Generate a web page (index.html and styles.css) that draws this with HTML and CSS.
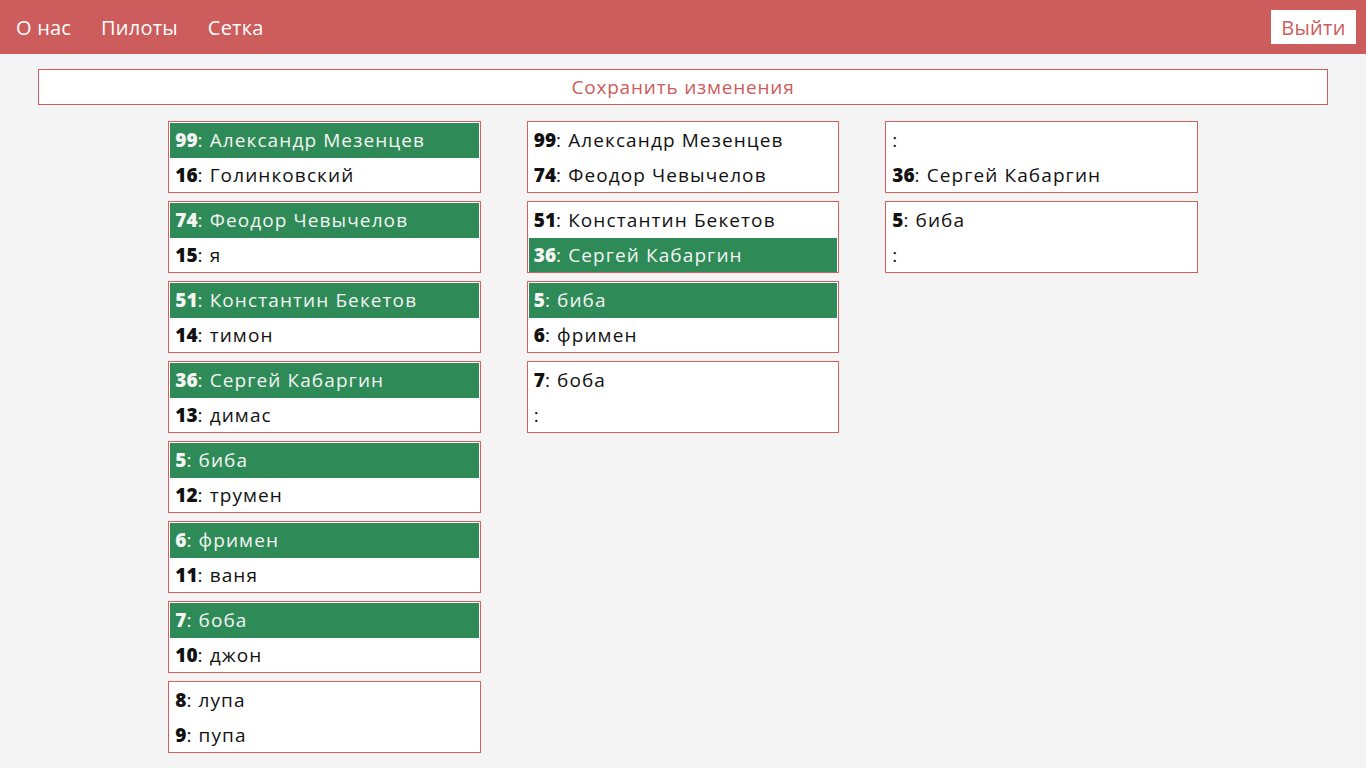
FILE: index.html
```html
<!DOCTYPE html>
<html lang="ru">
<head>
<meta charset="utf-8">
<title>Сетка</title>
<link rel="stylesheet" href="styles.css">
</head>
<body>
<header class="topbar">
  <nav class="nav">
    <a class="nav-link" href="#">О нас</a>
    <a class="nav-link" href="#">Пилоты</a>
    <a class="nav-link" href="#">Сетка</a>
  </nav>
  <button class="logout">Выйти</button>
</header>
<main class="main">
  <button class="save">Сохранить изменения</button>
  <div class="bracket">
    <div class="round">
      <div class="pair"><div class="row win"><b>99</b>: Александр Мезенцев</div><div class="row"><b>16</b>: Голинковский</div></div>
      <div class="pair"><div class="row win"><b>74</b>: Феодор Чевычелов</div><div class="row"><b>15</b>: я</div></div>
      <div class="pair"><div class="row win"><b>51</b>: Константин Бекетов</div><div class="row"><b>14</b>: тимон</div></div>
      <div class="pair"><div class="row win"><b>36</b>: Сергей Кабаргин</div><div class="row"><b>13</b>: димас</div></div>
      <div class="pair"><div class="row win"><b>5</b>: биба</div><div class="row"><b>12</b>: трумен</div></div>
      <div class="pair"><div class="row win"><b>6</b>: фримен</div><div class="row"><b>11</b>: ваня</div></div>
      <div class="pair"><div class="row win"><b>7</b>: боба</div><div class="row"><b>10</b>: джон</div></div>
      <div class="pair"><div class="row"><b>8</b>: лупа</div><div class="row"><b>9</b>: пупа</div></div>
    </div>
    <div class="round">
      <div class="pair"><div class="row"><b>99</b>: Александр Мезенцев</div><div class="row"><b>74</b>: Феодор Чевычелов</div></div>
      <div class="pair"><div class="row"><b>51</b>: Константин Бекетов</div><div class="row win"><b>36</b>: Сергей Кабаргин</div></div>
      <div class="pair"><div class="row win"><b>5</b>: биба</div><div class="row"><b>6</b>: фримен</div></div>
      <div class="pair"><div class="row"><b>7</b>: боба</div><div class="row">:</div></div>
    </div>
    <div class="round">
      <div class="pair"><div class="row">:</div><div class="row"><b>36</b>: Сергей Кабаргин</div></div>
      <div class="pair"><div class="row"><b>5</b>: биба</div><div class="row">:</div></div>
    </div>
  </div>
</main>
</body>
</html>
```
FILE: styles.css
```css
* { box-sizing: border-box; }
html, body { margin: 0; padding: 0; }
body {
  background: #f4f4f4;
  font-family: "Open Sans", "DejaVu Sans", sans-serif;
  color: #111;
}
.topbar {
  height: 54px;
  background: #cd5c5c;
  display: flex;
  align-items: center;
  justify-content: space-between;
  padding: 0 10px 0 16px;
}
.nav { display: flex; gap: 30px; }
.nav-link {
  color: #fff;
  text-decoration: none;
  font-size: 20px;
  letter-spacing: 0.2px;
}
.logout {
  background: #fff;
  border: none;
  color: #cd5c5c;
  font-family: inherit;
  font-size: 20px;
  letter-spacing: 0.3px;
  height: 34px;
  width: 85px;
  padding: 0;
}
.main { padding: 15px 38px 0; }
.save {
  display: block;
  width: 100%;
  height: 36px;
  background: #fff;
  border: 1px solid #cd5c5c;
  color: #cd5c5c;
  font-family: inherit;
  font-size: 19px;
  letter-spacing: 0.8px;
  padding: 0;
}
.bracket {
  display: flex;
  justify-content: center;
  gap: 46px;
  margin-top: 16px;
}
.round {
  width: 312.5px;
  display: flex;
  flex-direction: column;
  gap: 8px;
}
.pair {
  background: #fff;
  border: 1px solid #d55f5f;
  padding: 1px 1px 0;
}
.row {
  height: 34.5px;
  display: flex;
  align-items: center;
  padding-left: 5px;
  font-size: 19px;
  letter-spacing: 1.1px;
  white-space: pre;
}
.row b { font-weight: 800; letter-spacing: 0; }
.row.win { background: #2e8b57; color: #f4f4f4; }
```
